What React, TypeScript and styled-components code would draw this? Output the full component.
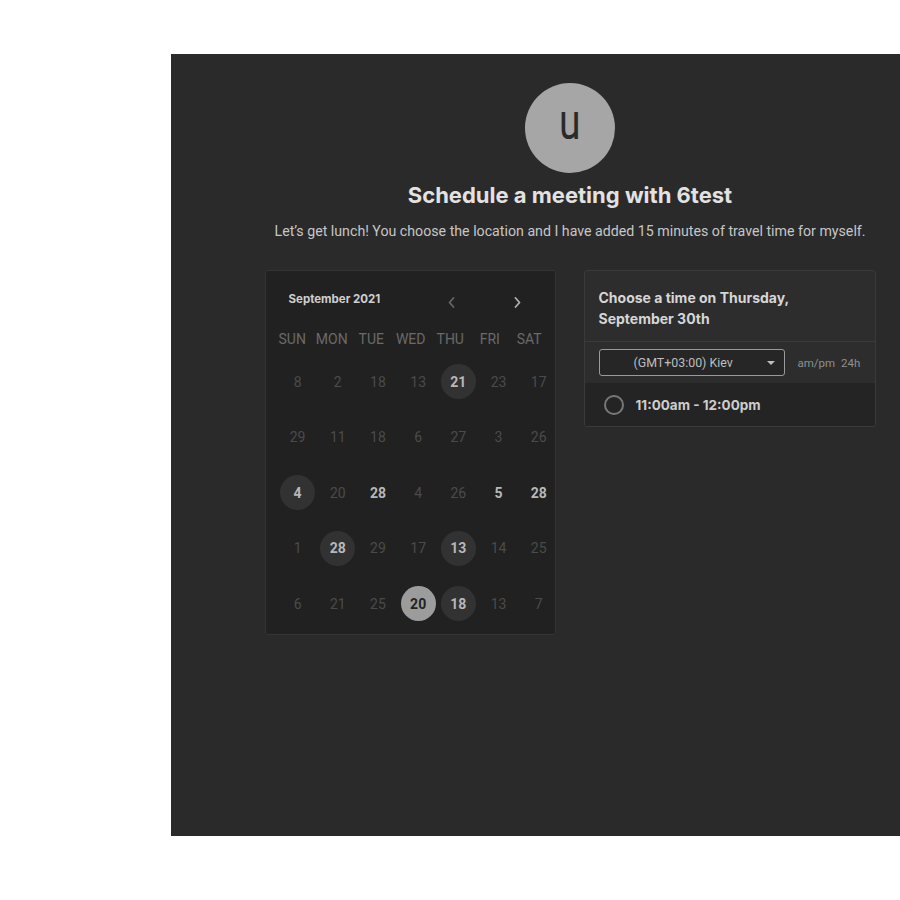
import React from "react";
import styled, { createGlobalStyle } from "styled-components";

const GlobalStyle = createGlobalStyle`
  html, body {
    margin: 0;
    padding: 0;
    background: #ffffff;
    overflow: hidden;
  }
  * { box-sizing: border-box; }
`;

const Page = styled.div`
  padding: 54px 0 0 171px;
  width: 1000px;
`;

const Panel = styled.div`
  width: 798px;
  height: 782px;
  background: #2a2a2a;
  display: flex;
  flex-direction: column;
  align-items: center;
  padding-top: 29px;
`;

const Avatar = styled.div`
  width: 90px;
  height: 90px;
  border-radius: 50%;
  background: #a6a6a6;
  color: #2a2a2a;
  display: flex;
  align-items: center;
  justify-content: center;
  font-family: Roboto, "Liberation Sans", sans-serif;
  font-size: 50px;
  line-height: 1;
  padding-bottom: 12px;
`;

const AvatarLetter = styled.span`
  display: inline-block;
  transform: scaleX(0.78);
`;

const Title = styled.h1`
  margin: 9px 0 0;
  font-family: Inter, "Liberation Sans", sans-serif;
  font-weight: 700;
  font-size: 22px;
  line-height: 26px;
  color: #e2e2e2;
`;

const Subtitle = styled.p`
  margin: 15px 0 0;
  font-family: Roboto, "Liberation Sans", sans-serif;
  font-size: 14.2px;
  line-height: 16px;
  color: #c6c6c6;
`;

const Columns = styled.div`
  margin-top: 31px;
  display: flex;
  align-items: flex-start;
  gap: 28px;
  width: 611px;
`;

const CalendarCard = styled.div`
  width: 291px;
  height: 365px;
  background: #212121;
  border: 1px solid #343434;
  border-radius: 3px;
  padding: 19px 0 0;
`;

const CalHeader = styled.div`
  display: flex;
  align-items: center;
  height: 18px;
  padding-left: 23px;
`;

const MonthLabel = styled.div`
  font-family: Inter, "Liberation Sans", sans-serif;
  font-weight: 700;
  font-size: 11.5px;
  color: #cfcfcf;
  width: 158px;
`;

const NavButton = styled.div<{ $bright?: boolean }>`
  width: 10px;
  display: flex;
  justify-content: center;
  margin-top: 6px;
  color: ${(p) => (p.$bright ? "#b0b0b0" : "#666666")};
  & + & { margin-left: 56px; }
`;

const WeekRow = styled.div`
  margin-top: 23px;
  padding-left: 7px;
  display: grid;
  grid-template-columns: repeat(7, 39.5px);
`;

const WeekDay = styled.div`
  text-align: center;
  font-family: Roboto, "Liberation Sans", sans-serif;
  font-size: 14px;
  line-height: 16px;
  color: #6a6a6a;
`;

const DayGrid = styled.div`
  margin-top: 7px;
  padding-left: 12px;
  display: grid;
  grid-template-columns: repeat(7, 40.2px);
  grid-auto-rows: 55.5px;
`;

const DayCell = styled.div`
  display: flex;
  align-items: center;
  justify-content: center;
`;

const DayNum = styled.div<{ $kind: "dim" | "bold" | "circle" | "selected" }>`
  width: 35px;
  height: 35px;
  border-radius: 50%;
  display: flex;
  align-items: center;
  justify-content: center;
  font-family: Roboto, "Liberation Sans", sans-serif;
  font-size: 14px;
  font-weight: ${(p) => (p.$kind === "dim" ? 400 : 700)};
  color: ${(p) =>
    p.$kind === "dim" ? "#4b4b4b" : p.$kind === "selected" ? "#232323" : "#b8b8b8"};
  background: ${(p) =>
    p.$kind === "circle" ? "#323232" : p.$kind === "selected" ? "#9c9c9c" : "transparent"};
`;

const TimeCard = styled.div`
  width: 292px;
  border: 1px solid #3a3a3a;
  border-radius: 3px;
  background: #2d2d2d;
  overflow: hidden;
`;

const TimeHeader = styled.div`
  padding: 16px 14px 12px;
  font-family: Inter, "Liberation Sans", sans-serif;
  font-weight: 700;
  font-size: 14px;
  line-height: 21px;
  color: #d6d6d6;
  border-bottom: 1px solid #3a3a3a;
`;

const ZoneRow = styled.div`
  height: 41px;
  display: flex;
  align-items: center;
  padding-left: 14px;
  gap: 13px;
`;

const ZoneSelect = styled.div`
  width: 186px;
  height: 27px;
  border: 1px solid #9a9a9a;
  border-radius: 3px;
  background: #262626;
  display: flex;
  align-items: center;
  padding: 0 9px 0 34px;
  font-family: Roboto, "Liberation Sans", sans-serif;
  font-size: 12.4px;
  color: #bdbdbd;
`;

const ZoneText = styled.span`
  flex: 1;
`;

const FormatToggle = styled.div`
  font-family: Roboto, "Liberation Sans", sans-serif;
  font-size: 11.5px;
  color: #8f8f8f;
  word-spacing: 3px;
`;

const SlotRow = styled.div`
  height: 43px;
  background: #242424;
  display: flex;
  align-items: center;
  padding-left: 19px;
  gap: 12px;
`;

const Radio = styled.div`
  width: 20px;
  height: 20px;
  border-radius: 50%;
  border: 2px solid #787878;
`;

const SlotText = styled.div`
  font-family: Inter, "Liberation Sans", sans-serif;
  font-weight: 700;
  font-size: 13.5px;
  color: #cdcdcd;
`;

type Kind = "dim" | "bold" | "circle" | "selected";
const days: [number, Kind][][] = [
  [[8, "dim"], [2, "dim"], [18, "dim"], [13, "dim"], [21, "circle"], [23, "dim"], [17, "dim"]],
  [[29, "dim"], [11, "dim"], [18, "dim"], [6, "dim"], [27, "dim"], [3, "dim"], [26, "dim"]],
  [[4, "circle"], [20, "dim"], [28, "bold"], [4, "dim"], [26, "dim"], [5, "bold"], [28, "bold"]],
  [[1, "dim"], [28, "circle"], [29, "dim"], [17, "dim"], [13, "circle"], [14, "dim"], [25, "dim"]],
  [[6, "dim"], [21, "dim"], [25, "dim"], [20, "selected"], [18, "circle"], [13, "dim"], [7, "dim"]],
];

const weekdays = ["SUN", "MON", "TUE", "WED", "THU", "FRI", "SAT"];

const Chevron = ({ dir }: { dir: "left" | "right" }) => (
  <svg width="7" height="11" viewBox="0 0 7 11" fill="none">
    <path
      d={dir === "left" ? "M5.5 1 L1.5 5.5 L5.5 10" : "M1.5 1 L5.5 5.5 L1.5 10"}
      stroke="currentColor"
      strokeWidth="1.8"
      strokeLinecap="round"
      strokeLinejoin="round"
    />
  </svg>
);

const Caret = () => (
  <svg width="8" height="4" viewBox="0 0 8 4">
    <path d="M0 0 L8 0 L4 4 Z" fill="#bdbdbd" />
  </svg>
);

export default function App() {
  return (
    <>
      <GlobalStyle />
      <Page>
        <Panel>
          <Avatar>
            <AvatarLetter>u</AvatarLetter>
          </Avatar>
          <Title>Schedule a meeting with 6test</Title>
          <Subtitle>
            Let’s get lunch! You choose the location and I have added 15 minutes of travel time for myself.
          </Subtitle>
          <Columns>
            <CalendarCard>
              <CalHeader>
                <MonthLabel>September 2021</MonthLabel>
                <NavButton>
                  <Chevron dir="left" />
                </NavButton>
                <NavButton $bright>
                  <Chevron dir="right" />
                </NavButton>
              </CalHeader>
              <WeekRow>
                {weekdays.map((w) => (
                  <WeekDay key={w}>{w}</WeekDay>
                ))}
              </WeekRow>
              <DayGrid>
                {days.flat().map(([n, k], i) => (
                  <DayCell key={i}>
                    <DayNum $kind={k}>{n}</DayNum>
                  </DayCell>
                ))}
              </DayGrid>
            </CalendarCard>
            <TimeCard>
              <TimeHeader>
                Choose a time on Thursday,
                <br />
                September 30th
              </TimeHeader>
              <ZoneRow>
                <ZoneSelect>
                  <ZoneText>(GMT+03:00) Kiev</ZoneText>
                  <Caret />
                </ZoneSelect>
                <FormatToggle>am/pm 24h</FormatToggle>
              </ZoneRow>
              <SlotRow>
                <Radio />
                <SlotText>11:00am - 12:00pm</SlotText>
              </SlotRow>
            </TimeCard>
          </Columns>
        </Panel>
      </Page>
    </>
  );
}
